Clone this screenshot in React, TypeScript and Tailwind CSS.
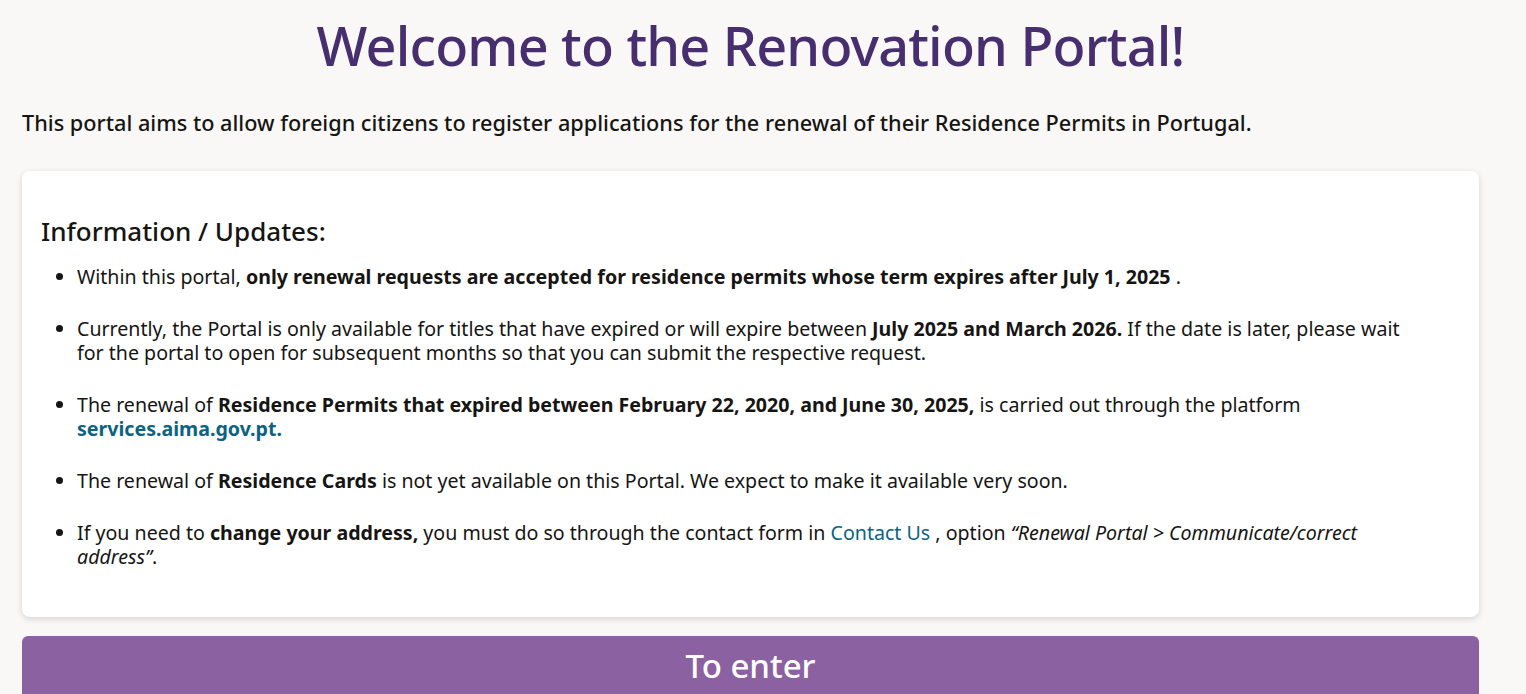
import React from 'react'

const App = () => {
    return (
        <div className="min-h-screen w-full bg-[#f9f8f7] pl-[22px] pr-[47px] pt-[8px] text-[#161513]" style={{ fontFamily: '"Noto Sans", sans-serif' }}>
            <h1 className="text-center text-[54px] font-medium leading-[74px] text-[#472e6e] tracking-[-0.8px]">
                Welcome to the Renovation Portal!
            </h1>
            <p className="mt-[27px] text-[21.7px] font-medium leading-[28px]">
                This portal aims to allow foreign citizens to register applications for the renewal of their Residence Permits in Portugal.
            </p>
            <div className="mt-[34px] rounded-lg bg-white pl-[19px] pr-[58px] pt-[42px] pb-[20px] shadow-[0_2px_6px_rgba(0,0,0,0.15)]">
                <h2 className="text-[26px] font-medium leading-[36px]">Information / Updates:</h2>
                <ul className="mt-[16px] list-disc pl-[36px] text-[19.6px] leading-[24px]">
                    <li className="mb-[28px]">
                        Within this portal, <b className="font-bold">only renewal requests are accepted for residence permits whose term expires after July 1, 2025</b> .
                    </li>
                    <li className="mb-[28px]">
                        Currently, the Portal is only available for titles that have expired or will expire between <b className="font-bold">July 2025 and March 2026.</b> If the date is later, please wait for the portal to open for subsequent months so that you can submit the respective request.
                    </li>
                    <li className="mb-[28px]">
                        The renewal of <b className="font-bold">Residence Permits that expired between February 22, 2020, and June 30, 2025,</b> is carried out through the platform{' '}
                        <a href="#" className="font-bold text-[#0b6383]">services.aima.gov.pt.</a>
                    </li>
                    <li className="mb-[28px]">
                        The renewal of <b className="font-bold">Residence Cards</b> is not yet available on this Portal. We expect to make it available very soon.
                    </li>
                    <li className="mb-[28px]">
                        If you need to <b className="font-bold">change your address,</b> you must do so through the contact form in{' '}
                        <a href="#" className="text-[#0b6383]">Contact Us</a> , option <i>“Renewal Portal &gt; Communicate/correct address”</i>.
                    </li>
                </ul>
            </div>
            <button className="mt-[19px] flex h-[60px] w-full items-center justify-center rounded-t-md bg-[#8b61a2] text-[33px] font-medium text-white">
                To enter
            </button>
        </div>
    )
}

export default App
